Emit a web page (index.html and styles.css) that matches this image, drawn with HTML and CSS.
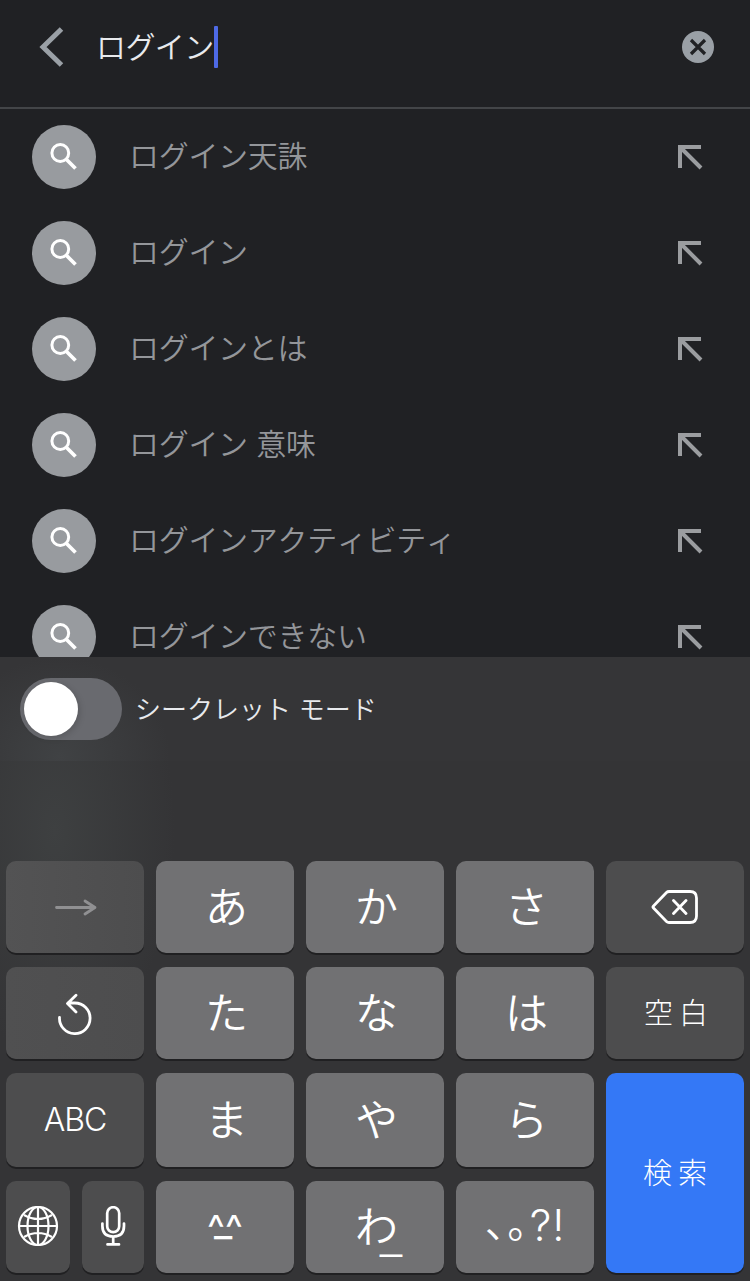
FILE: index.html
```html
<!DOCTYPE html>
<html lang="ja">
<head>
    <meta charset="UTF-8">
    <meta name="viewport" content="width=device-width, initial-scale=1.0">
    <title>ログイン</title>
    <link rel="stylesheet" href="styles.css">
</head>
<body>
    <!-- shared icons -->
    <svg class="sprite" width="0" height="0">
        <symbol id="search" viewBox="0 0 64 64">
            <circle cx="28.3" cy="28" r="8.4" fill="none" stroke="#fff" stroke-width="3"/>
            <path d="M34 34L43.5 43.5" stroke="#fff" stroke-width="3.7"/>
        </symbol>
        <symbol id="fill" viewBox="0 0 26 26">
            <path d="M24 3H3V24M4 4L24 24" fill="none" stroke="#9b9da0" stroke-width="4"/>
        </symbol>
    </svg>

    <div class="screen">
        <header class="search-bar">
            <svg class="back" width="26" height="40" viewBox="0 0 26 40"><path d="M23.5 2L5 20L23.5 38" fill="none" stroke="#9aa0a6" stroke-width="5"/></svg>
            <div class="query">ログイン</div>
            <span class="caret"></span>
            <svg class="clear" width="32" height="32" viewBox="0 0 32 32"><circle cx="16" cy="16" r="16" fill="#9aa0a6"/><path d="M9 9L23 23M23 9L9 23" stroke="#202124" stroke-width="3.2"/></svg>
        </header>

        <ul class="suggestions">
            <li><svg class="round"><use href="#search"/></svg><span>ログイン天誅</span><svg class="arrow"><use href="#fill"/></svg></li>
            <li><svg class="round"><use href="#search"/></svg><span>ログイン</span><svg class="arrow"><use href="#fill"/></svg></li>
            <li><svg class="round"><use href="#search"/></svg><span>ログインとは</span><svg class="arrow"><use href="#fill"/></svg></li>
            <li><svg class="round"><use href="#search"/></svg><span>ログイン 意味</span><svg class="arrow"><use href="#fill"/></svg></li>
            <li><svg class="round"><use href="#search"/></svg><span>ログインアクティビティ</span><svg class="arrow"><use href="#fill"/></svg></li>
            <li><svg class="round"><use href="#search"/></svg><span>ログインできない</span><svg class="arrow"><use href="#fill"/></svg></li>
        </ul>

        <div class="incognito">
            <div class="toggle"><div class="knob"></div></div>
            <span>シークレット モード</span>
        </div>

        <div class="keyboard">
            <button class="key dark first">
                <svg width="44" height="20" viewBox="0 0 44 20"><path d="M3.5 10.5H41.5M32 4L42 10.5L32 17" fill="none" stroke="#909092" stroke-width="2.8" stroke-linecap="round" stroke-linejoin="round"/></svg>
            </button>
            <button class="key">あ</button>
            <button class="key">か</button>
            <button class="key">さ</button>
            <button class="key dark">
                <svg width="48" height="36" viewBox="0 0 48 36"><path d="M18 2.5H39Q45.5 2.5 45.5 9V27Q45.5 33.5 39 33.5H18Q16.5 33.5 15.5 32.5L2.5 19Q1.5 18 2.5 17L15.5 3.5Q16.5 2.5 18 2.5ZM22.5 11.5L35 24.5M35 11.5L22.5 24.5" fill="none" stroke="#fff" stroke-width="2.8" stroke-linecap="round" stroke-linejoin="round"/></svg>
            </button>

            <button class="key dark second">
                <svg class="undo" width="36" height="42" viewBox="0 0 36 42"><path d="M2.5 24.5A15.3 15.3 0 1 0 17.8 10H11M19 2.2L10.5 10.5L19 19" fill="none" stroke="#fff" stroke-width="2.8" stroke-linecap="round" stroke-linejoin="round"/></svg>
            </button>
            <button class="key">た</button>
            <button class="key">な</button>
            <button class="key">は</button>
            <button class="key dark word">空白</button>

            <button class="key dark abc">ABC</button>
            <button class="key">ま</button>
            <button class="key">や</button>
            <button class="key">ら</button>
            <button class="key word enter">検索</button>

            <div class="pair">
                <button class="key dark globe">
                    <svg width="42" height="42" viewBox="0 0 42 42"><path d="M21 1V39M2 20H40M7 9Q21 17 35 9M7 31Q21 23 35 31" fill="none" stroke="#fff" stroke-width="2.2"/><circle cx="21" cy="20" r="19" fill="none" stroke="#fff" stroke-width="2.2"/><ellipse cx="21" cy="20" rx="10.5" ry="19" fill="none" stroke="#fff" stroke-width="2.2"/></svg>
                </button>
                <button class="key dark mic">
                    <svg width="26" height="42" viewBox="0 0 26 42"><rect x="7.2" y="1.2" width="12" height="25" rx="6" fill="none" stroke="#fff" stroke-width="2.7"/><path d="M2.4 17.5V20Q2.4 30.5 13.2 30.5Q24 30.5 24 20V17.5M13.2 31V37.5M7.5 38.4H19" fill="none" stroke="#fff" stroke-width="2.7" stroke-linecap="round"/></svg>
                </button>
            </div>
            <button class="key face"><span class="eyes">^^</span><span class="mouth">_</span></button>
            <button class="key">わ<span class="under">_</span></button>
            <button class="key punct"><span class="kuten">、。</span><span class="latin">?!</span></button>
        </div>
    </div>
</body>
</html>
```

FILE: styles.css
```css
* {
    box-sizing: border-box;
}

body {
    margin: 0;
    background: #202124;
    font-family: "Noto Sans CJK JP", sans-serif;
    font-weight: 300;
    font-kerning: none;
}

.sprite {
    position: absolute;
}

.screen {
    width: 750px;
    height: 1281px;
    display: flex;
    flex-direction: column;
    overflow: hidden;
}

/* search field */
.search-bar {
    display: flex;
    align-items: center;
    height: 109px;
    padding: 0 36px 13px 38px;
    border-bottom: 2px solid #434548;
}

.query {
    margin-left: 32px;
    padding-bottom: 4px;
    font-size: 30px;
    font-weight: 350;
    letter-spacing: -0.6px;
    color: #e8eaed;
}

.caret {
    width: 4px;
    height: 42px;
    border-radius: 1px;
    background: #4e6ae6;
}

.clear {
    margin-left: auto;
}

/* suggestion list */
.suggestions {
    height: 548px;
    margin: 0;
    padding: 0;
    list-style: none;
    overflow: hidden;
}

.suggestions li {
    display: flex;
    align-items: center;
    height: 96px;
    padding: 0 47px 0 32px;
    font-size: 30px;
    font-weight: 350;
    letter-spacing: -0.3px;
    word-spacing: 2px;
    color: #94969a;
}

.suggestions span {
    margin-left: 33px;
    padding-bottom: 6px;
}

.round {
    width: 64px;
    height: 64px;
    border-radius: 50%;
    background: #989b9f;
}

.arrow {
    width: 26px;
    height: 26px;
    margin-left: auto;
}

/* incognito switch */
.incognito {
    display: flex;
    align-items: center;
    height: 104px;
    padding-left: 20px;
    background: radial-gradient(ellipse 110px 100px at 60px 100px, #404244 0, #353537 100%);
    font-size: 26px;
    font-weight: 350;
    word-spacing: 2px;
    color: #e8eaed;
}

.incognito span {
    margin-left: 13px;
    padding-bottom: 4px;
}

.toggle {
    width: 102px;
    height: 62px;
    padding: 4px;
    border-radius: 31px;
    background: #696a6f;
}

.knob {
    width: 54px;
    height: 54px;
    border-radius: 50%;
    background: #fff;
    box-shadow: 2px 2px 6px rgba(0, 0, 0, 0.15);
}

/* kana keyboard */
.keyboard {
    display: grid;
    grid-template-columns: repeat(5, 138px);
    grid-template-rows: 92px 92px 94px 92px;
    gap: 14px 12px;
    height: 520px;
    padding: 100px 6px 8px;
    background: radial-gradient(ellipse 120px 230px at 55px 70px, #3e4041 0, #343436 100%);
}

.key {
    position: relative;
    display: flex;
    align-items: center;
    justify-content: center;
    padding: 0 0 5px 3px;
    border: none;
    border-radius: 10px;
    background: #717173;
    box-shadow: 0 2px 0 #202022;
    font-family: inherit;
    font-size: 43px;
    font-weight: 350;
    line-height: 1;
    color: #fff;
}

.dark {
    padding: 0;
    background: #4d4d4e;
}

.first {
    background: linear-gradient(90deg, #535354, #4d4d4e);
}

.second {
    background: linear-gradient(90deg, #505051, #4d4d4e);
}

.undo {
    margin-top: 2px;
}

.word {
    padding: 0 0 4px 8px;
    font-size: 29px;
    font-weight: 300;
    letter-spacing: 6px;
}

.abc {
    font-family: Inter, sans-serif;
    font-size: 32px;
    font-weight: 350;
    letter-spacing: -1px;
}

.enter {
    grid-row: span 2;
    padding: 0 0 3px 6px;
    background: #3478f6;
}

.pair {
    display: flex;
    gap: 12px;
}

.globe {
    width: 64px;
}

.mic {
    width: 62px;
}

.face {
    padding: 0;
    font-family: Inter, sans-serif;
    font-weight: 400;
}

.eyes {
    padding-top: 2px;
    font-size: 38px;
}

.mouth {
    position: absolute;
    left: 58px;
    top: 21px;
    font-size: 40px;
}

.under {
    position: absolute;
    left: 73px;
    top: 30px;
}

.punct {
    padding: 0;
}

.kuten {
    padding-bottom: 14px;
    font-size: 41px;
    font-feature-settings: "halt";
    letter-spacing: 2px;
}

.latin {
    padding-bottom: 4px;
    font-family: Inter, sans-serif;
    font-size: 43px;
    font-weight: 300;
    letter-spacing: 1px;
}
```
